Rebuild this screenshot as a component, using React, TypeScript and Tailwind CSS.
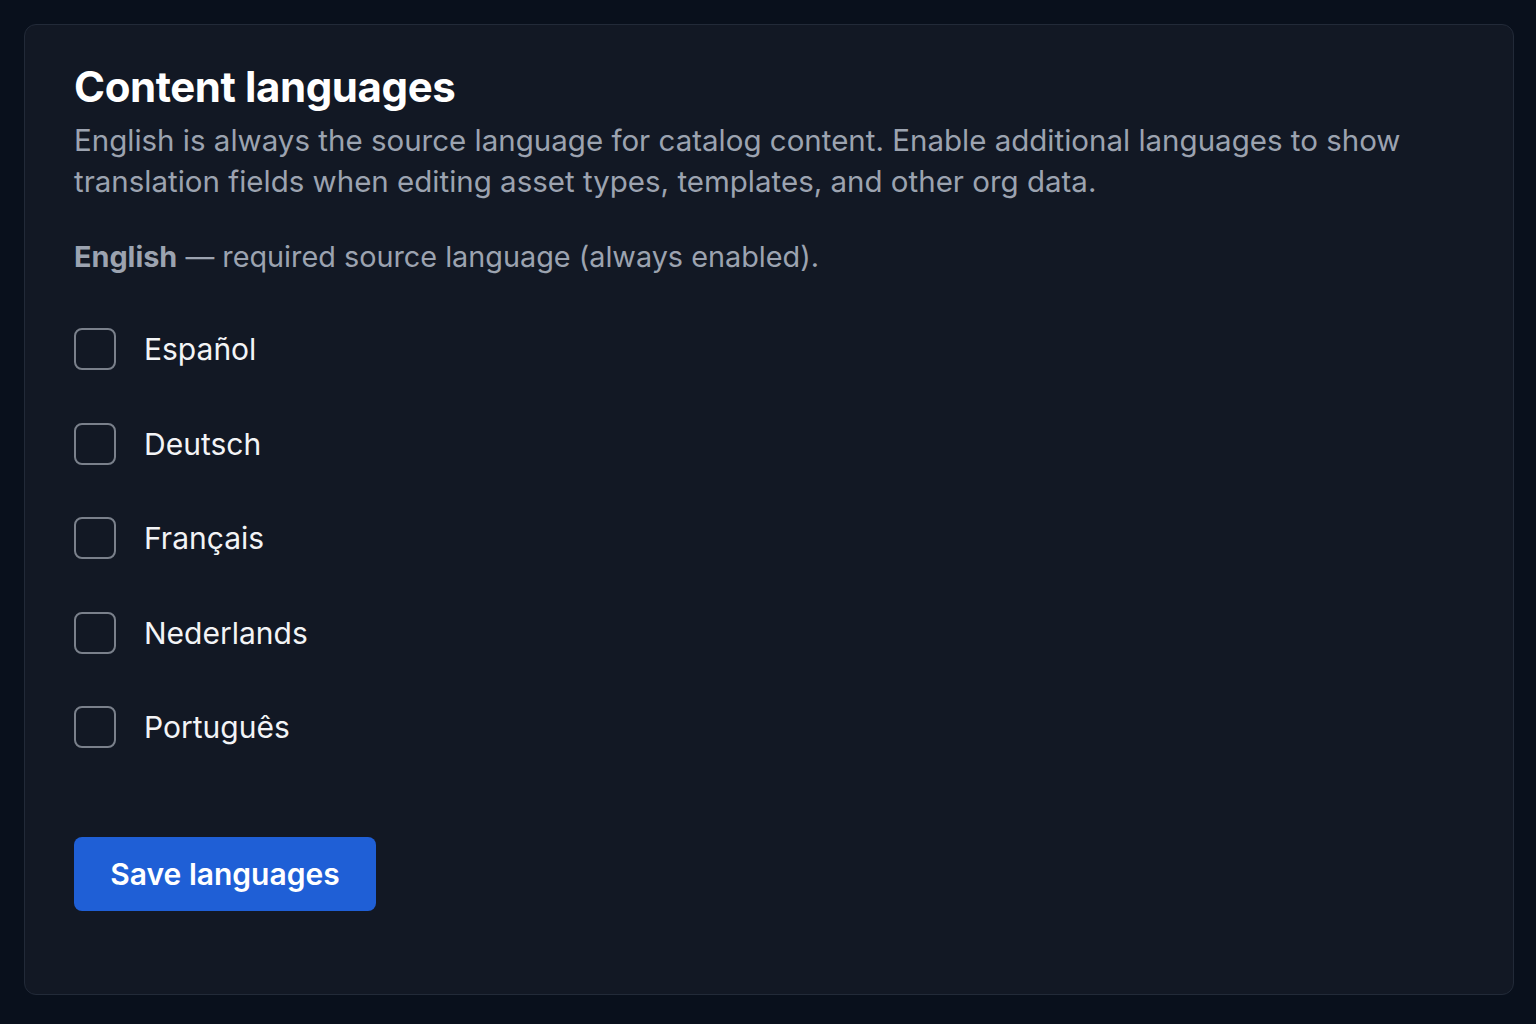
import React, { useState } from 'react';

const LANGUAGES = [
  { code: 'es', label: 'Español' },
  { code: 'de', label: 'Deutsch' },
  { code: 'fr', label: 'Français' },
  { code: 'nl', label: 'Nederlands' },
  { code: 'pt', label: 'Português' },
];

export default function App() {
  const [enabled, setEnabled] = useState<Record<string, boolean>>({});

  const toggle = (code: string) => setEnabled((prev) => ({ ...prev, [code]: !prev[code] }));

  return (
    <div className="min-h-screen w-full bg-[#09101c] pt-6 pl-6 pr-[22px] pb-6 font-['Inter',sans-serif]">
      <section className="rounded-xl border border-[#222a38] bg-[#121824] px-[49px] pt-[38px] pb-[83px]">
        <h2 className="text-[42px] font-bold leading-[48px] tracking-[-0.01em] text-white">Content languages</h2>
        <p className="mt-[9px] max-w-[1380px] text-[29.5px] leading-[41px] text-[#9ca3b0]">
          English is always the source language for catalog content. Enable additional languages to show translation
          fields when editing asset types, templates, and other org data.
        </p>

        <p className="mt-[34px] text-[28.8px] leading-[41px] text-[#9ca3b0]">
          <span className="font-bold">English</span> — required source language (always enabled).
        </p>

        <div className="mt-[51px] flex flex-col gap-[52.5px]">
          {LANGUAGES.map((lang) => (
            <label key={lang.code} className="flex h-[42px] cursor-pointer items-center gap-[28px]">
              <button
                type="button"
                onClick={() => toggle(lang.code)}
                className={`flex h-[42px] w-[42px] items-center justify-center rounded-[8px] border-2 ${
                  enabled[lang.code] ? 'border-[#2563eb] bg-[#2563eb]' : 'border-[#7a808b] bg-transparent'
                }`}
              >
                {enabled[lang.code] && (
                  <svg viewBox="0 0 24 24" className="h-6 w-6" fill="none" stroke="white" strokeWidth={3}>
                    <path d="M5 12l5 5L19 7" strokeLinecap="round" strokeLinejoin="round" />
                  </svg>
                )}
              </button>
              <span className="text-[30px] leading-none text-[#f3f4f6]">{lang.label}</span>
            </label>
          ))}
        </div>

        <button
          type="button"
          className="mt-[89px] h-[74px] w-[302px] rounded-[8px] bg-[#1f5fd6] text-[30px] font-semibold text-white"
        >
          Save languages
        </button>
      </section>
    </div>
  );
}
